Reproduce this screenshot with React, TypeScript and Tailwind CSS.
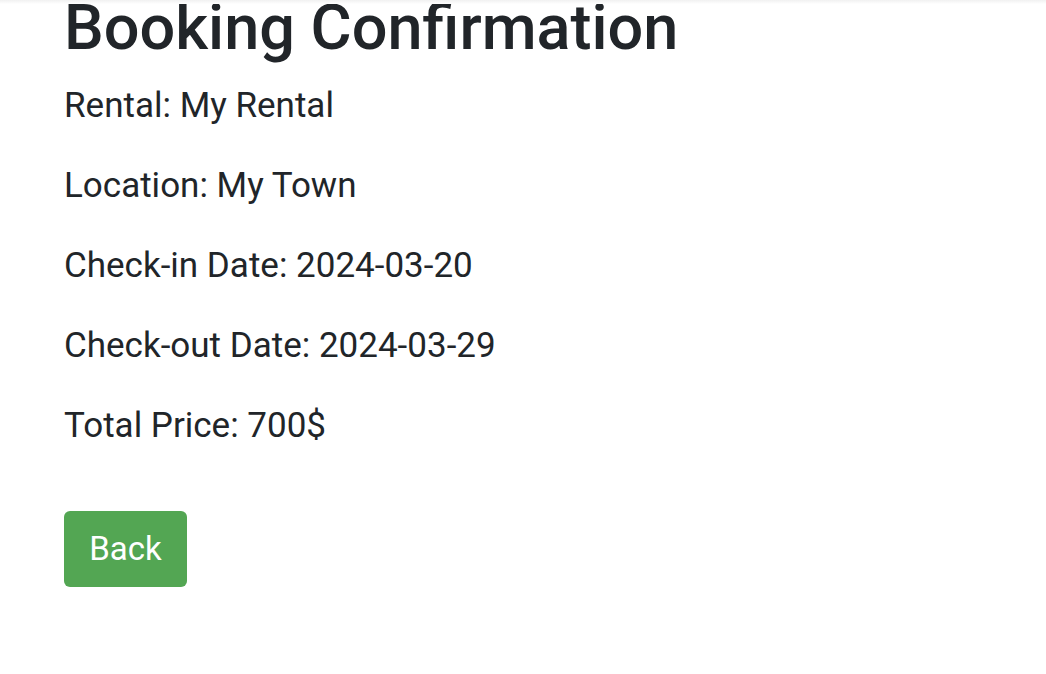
import React from 'react';

const details = [
  { label: 'Rental', value: 'My Rental' },
  { label: 'Location', value: 'My Town' },
  { label: 'Check-in Date', value: '2024-03-20' },
  { label: 'Check-out Date', value: '2024-03-29' },
  { label: 'Total Price', value: '700$' },
];

function App() {
  return (
    <div className="relative min-h-screen bg-white text-[#212529] font-['Roboto',sans-serif] overflow-hidden">
      <div className="pointer-events-none absolute inset-x-0 top-0 h-[4px] bg-gradient-to-b from-[#f1f1f1] to-white" />
      <div className="px-[64px]">
        <h1 className="text-[63px] leading-[56px] font-medium mb-[26px]">Booking Confirmation</h1>
        {details.map((d) => (
          <p key={d.label} className="text-[35px] leading-[48px] mb-[32px]">
            {d.label}: {d.value}
          </p>
        ))}
        <div className="pt-[29px]">
          <button className="w-[123px] h-[76px] rounded-[6px] bg-[#53a653] text-white text-[33px]">
            Back
          </button>
        </div>
      </div>
    </div>
  );
}

export default App;
